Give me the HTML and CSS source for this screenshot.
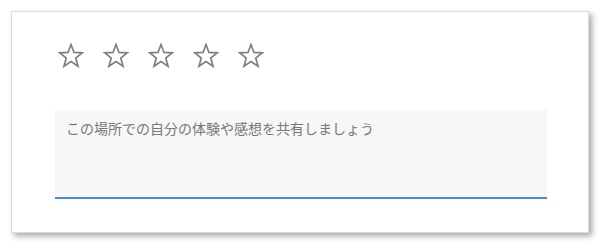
FILE: index.html
```html
<!DOCTYPE html>
<html lang="ja">
<head>
<meta charset="utf-8">
<link rel="stylesheet" href="styles.css">
</head>
<body>
<div class="card">
  <div class="stars">
    <svg class="star" viewBox="0 0 26 26" width="26" height="26"><polygon points="13,1.5 15.94,9.46 24.41,9.79 17.76,15.05 20.05,23.21 13,18.5 5.95,23.21 8.24,15.05 1.59,9.79 10.06,9.46"/></svg>
    <svg class="star" viewBox="0 0 26 26" width="26" height="26"><polygon points="13,1.5 15.94,9.46 24.41,9.79 17.76,15.05 20.05,23.21 13,18.5 5.95,23.21 8.24,15.05 1.59,9.79 10.06,9.46"/></svg>
    <svg class="star" viewBox="0 0 26 26" width="26" height="26"><polygon points="13,1.5 15.94,9.46 24.41,9.79 17.76,15.05 20.05,23.21 13,18.5 5.95,23.21 8.24,15.05 1.59,9.79 10.06,9.46"/></svg>
    <svg class="star" viewBox="0 0 26 26" width="26" height="26"><polygon points="13,1.5 15.94,9.46 24.41,9.79 17.76,15.05 20.05,23.21 13,18.5 5.95,23.21 8.24,15.05 1.59,9.79 10.06,9.46"/></svg>
    <svg class="star" viewBox="0 0 26 26" width="26" height="26"><polygon points="13,1.5 15.94,9.46 24.41,9.79 17.76,15.05 20.05,23.21 13,18.5 5.95,23.21 8.24,15.05 1.59,9.79 10.06,9.46"/></svg>
  </div>
  <textarea class="review" placeholder="この場所での自分の体験や感想を共有しましょう"></textarea>
</div>
</body>
</html>
```

FILE: styles.css
```css
html, body {
  margin: 0;
  padding: 0;
  background: #ffffff;
}
body {
  padding: 11px;
  font-family: "Noto Sans CJK JP", "Noto Sans", sans-serif;
}
.card {
  box-sizing: border-box;
  width: 578px;
  height: 222px;
  border: 1px solid #dcdcdc;
  background: #ffffff;
  box-shadow: 3px 3px 6px rgba(0, 0, 0, 0.35);
  padding: 31px 41px 0 43px;
  display: flex;
  flex-direction: column;
}
.stars {
  display: flex;
  gap: 19px;
  margin-left: 3px;
  height: 26px;
}
.star {
  display: block;
  fill: none;
  stroke: #808080;
  stroke-width: 1.7;
  stroke-linejoin: miter;
}
.review {
  box-sizing: border-box;
  display: block;
  margin-top: 41px;
  width: 492px;
  height: 89px;
  border: none;
  border-bottom: 2px solid #4a89dc;
  background: #f7f7f7;
  padding: 8px 11px;
  font-family: "Noto Sans CJK JP", "Noto Sans", sans-serif;
  font-size: 14px;
  line-height: 20px;
  color: #333;
  resize: none;
  outline: none;
}
.review::placeholder {
  color: #777777;
  opacity: 1;
}
```
